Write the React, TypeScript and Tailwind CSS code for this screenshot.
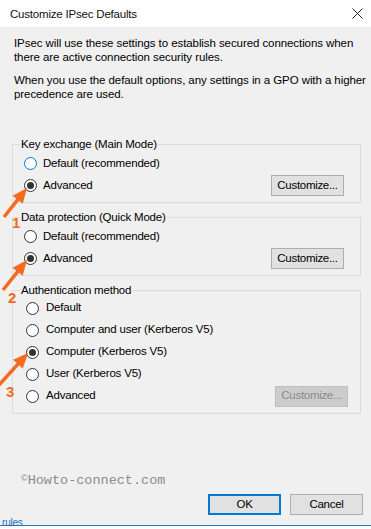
import React from "react";

function Radio({ checked, focus }: { checked?: boolean; focus?: boolean }) {
  return (
    <span
      className={
        focus
          ? "w-[13px] h-[13px] rounded-full border border-[#0078d7] bg-white flex items-center justify-center shrink-0"
          : "w-[13px] h-[13px] rounded-full border border-[#333333] bg-white flex items-center justify-center shrink-0"
      }
    >
      {checked && <span className="w-[7px] h-[7px] rounded-full bg-[#333333]" />}
    </span>
  );
}

function Btn({ children, disabled, primary }: { children: React.ReactNode; disabled?: boolean; primary?: boolean }) {
  if (disabled)
    return (
      <div className="w-[73px] h-[21px] border border-[#bfbfbf] bg-[#cccccc] text-[#8a8a8a] flex items-center justify-center tracking-[-0.3px]">
        {children}
      </div>
    );
  if (primary)
    return (
      <div className="w-[73px] h-[21px] border-2 border-[#0078d7] bg-[#e1e1e1] text-black flex items-center justify-center">
        {children}
      </div>
    );
  return (
    <div className="w-[73px] h-[21px] border border-[#adadad] bg-[#e1e1e1] text-black flex items-center justify-center tracking-[-0.3px]">
      {children}
    </div>
  );
}

function arrowParts(tip: [number, number], tail: [number, number], headLen: number, halfW: number) {
  const dx = tip[0] - tail[0];
  const dy = tip[1] - tail[1];
  const len = Math.sqrt(dx * dx + dy * dy);
  const ux = dx / len;
  const uy = dy / len;
  const bx = tip[0] - ux * headLen;
  const by = tip[1] - uy * headLen;
  const nx = -uy;
  const ny = ux;
  const pts = `${tip[0]},${tip[1]} ${bx + nx * halfW},${by + ny * halfW} ${bx - nx * halfW},${by - ny * halfW}`;
  return { pts, bx: bx + ux * 2, by: by + uy * 2 };
}

function Arrow({ tip, tail }: { tip: [number, number]; tail: [number, number] }) {
  const a = arrowParts(tip, tail, 15, 6.5);
  return (
    <g>
      <line x1={tail[0]} y1={tail[1]} x2={a.bx} y2={a.by} stroke="#f26b21" strokeWidth={3.5} />
      <polygon points={a.pts} fill="#f26b21" />
    </g>
  );
}

export default function App() {
  const font = { fontFamily: '"Liberation Sans", Arial, sans-serif' };
  return (
    <div
      className="w-[371px] h-[529px] relative overflow-hidden bg-[#f0f0f0] flex flex-col text-black text-[11.5px] tracking-[-0.2px]"
      style={font}
    >
      <div className="h-[27px] bg-white flex items-center justify-between pl-[10px] pr-[8px] shrink-0">
        <span className="leading-[14px] text-[#111] text-[11.5px]">Customize IPsec Defaults</span>
        <svg width="11" height="11" viewBox="0 0 11 11">
          <line x1="0.5" y1="0.5" x2="10.5" y2="10.5" stroke="#222" strokeWidth="1" />
          <line x1="10.5" y1="0.5" x2="0.5" y2="10.5" stroke="#222" strokeWidth="1" />
        </svg>
      </div>

      <div className="pt-[9px] pl-[14px] leading-[14px] whitespace-nowrap tracking-[-0.08px]">
        <p>
          IPsec will use these settings to establish secured connections when
          <br />
          there are active connection security rules.
        </p>
        <p className="mt-[9px]">
          When you use the default options, any settings in a GPO with a higher
          <br />
          precedence are used.
        </p>
      </div>

      <fieldset className="mt-[36px] ml-[12px] w-[349px] border border-[#dcdcdc] pb-[6px]">
        <legend className="ml-[7px] px-[1px] leading-[14px]">Key exchange (Main Mode)</legend>
        <div className="pt-[2px] flex flex-col gap-[1px] pl-[11px] pr-[16px]">
          <div className="h-[21px] flex items-center gap-[6px]">
            <Radio focus />
            <span>Default (recommended)</span>
          </div>
          <div className="h-[21px] flex items-center gap-[6px]">
            <Radio checked />
            <span className="flex-1">Advanced</span>
            <Btn>Customize...</Btn>
          </div>
        </div>
      </fieldset>

      <fieldset className="mt-[7px] ml-[12px] w-[349px] border border-[#dcdcdc] pb-[6px]">
        <legend className="ml-[7px] px-[1px] leading-[14px]">Data protection (Quick Mode)</legend>
        <div className="pt-[2px] flex flex-col gap-[1px] pl-[11px] pr-[16px]">
          <div className="h-[21px] flex items-center gap-[6px]">
            <Radio />
            <span>Default (recommended)</span>
          </div>
          <div className="h-[21px] flex items-center gap-[6px]">
            <Radio checked />
            <span className="flex-1">Advanced</span>
            <Btn>Customize...</Btn>
          </div>
        </div>
      </fieldset>

      <fieldset className="mt-[7px] ml-[12px] w-[349px] border border-[#dcdcdc] pb-[6px]">
        <legend className="ml-[7px] px-[1px] leading-[14px]">Authentication method</legend>
        <div className="flex flex-col pl-[13px] pr-[12px]">
          <div className="h-[22px] flex items-center gap-[7px]">
            <Radio />
            <span>Default</span>
          </div>
          <div className="h-[22px] flex items-center gap-[7px]">
            <Radio />
            <span>Computer and user (Kerberos V5)</span>
          </div>
          <div className="h-[22px] flex items-center gap-[7px]">
            <Radio checked />
            <span>Computer (Kerberos V5)</span>
          </div>
          <div className="h-[22px] flex items-center gap-[7px]">
            <Radio />
            <span>User (Kerberos V5)</span>
          </div>
          <div className="h-[22px] flex items-center gap-[7px]">
            <Radio />
            <span className="flex-1">Advanced</span>
            <Btn disabled>Customize...</Btn>
          </div>
        </div>
      </fieldset>

      <div className="mt-[59px] h-[16px] pl-[21px] flex items-center text-[#8c8c8c] tracking-normal">
        <span className="text-[9px] leading-[9px] self-start mt-[1px]">©</span>
        <span className="text-[13.5px] leading-[16px]" style={{ fontFamily: '"Liberation Mono", "Courier New", monospace' }}>
          Howto-connect.com
        </span>
      </div>

      <div className="mt-[5px] h-[21px] flex justify-end gap-[9px] pr-[8px]">
        <Btn primary>OK</Btn>
        <Btn>Cancel</Btn>
      </div>

      <div className="mt-[10px] h-px bg-[#1f78c8] shrink-0" />
      <div className="flex-1 bg-white" />

      <span className="absolute left-[2px] top-[518px] text-[10px] leading-[10px] text-[#1f6fb8]">rules</span>

      <svg className="absolute left-0 top-0 pointer-events-none" width="371" height="529" viewBox="0 0 371 529">
        <Arrow tip={[27, 188]} tail={[4, 217]} />
        <Arrow tip={[27, 260]} tail={[3, 290]} />
        <Arrow tip={[28, 353]} tail={[-1, 385]} />
        <text x="12" y="228" fill="#f26b21" fontSize="15" fontWeight="600" fontFamily='"Liberation Sans", Arial, sans-serif'>1</text>
        <text x="8" y="303" fill="#f26b21" fontSize="15" fontWeight="600" fontFamily='"Liberation Sans", Arial, sans-serif'>2</text>
        <text x="6" y="397" fill="#f26b21" fontSize="15" fontWeight="600" fontFamily='"Liberation Sans", Arial, sans-serif'>3</text>
      </svg>
    </div>
  );
}
